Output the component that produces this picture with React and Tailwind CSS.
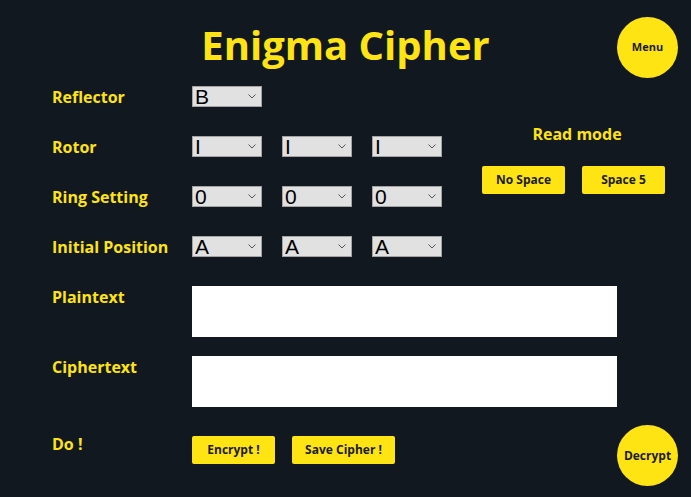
import React, { useState } from 'react';

const Chevron = () => (
  <svg
    className="pointer-events-none absolute right-[6px] top-[8px]"
    width="8"
    height="5"
    viewBox="0 0 8 5"
    fill="none"
  >
    <path d="M0.5 0.5 L4 4 L7.5 0.5" stroke="#555" strokeWidth="1" />
  </svg>
);

const Select = ({ value, options, onChange }) => (
  <div className="relative w-[70px] h-[21px]">
    <select
      value={value}
      onChange={(e) => onChange(e.target.value)}
      className="appearance-none w-full h-full bg-[#e1e1e1] border border-[#a3a3a3] text-black text-[21px] leading-[19px] pl-[2px] font-['Liberation_Sans',sans-serif] outline-none"
    >
      {options.map((o) => (
        <option key={o} value={o}>
          {o}
        </option>
      ))}
    </select>
    <Chevron />
  </div>
);

const Label = ({ children, className = '' }) => (
  <div className={`w-[140px] shrink-0 text-[16px] leading-6 font-bold text-[#ffe414] ${className}`}>
    {children}
  </div>
);

const YellowButton = ({ children, className = '' }) => (
  <button
    className={`h-[28px] rounded-[2px] bg-[#ffe414] text-[#1b1b1b] text-[12px] font-bold ${className}`}
  >
    {children}
  </button>
);

const rotors = ['I', 'II', 'III', 'IV', 'V'];
const rings = Array.from({ length: 26 }, (_, i) => String(i));
const letters = 'ABCDEFGHIJKLMNOPQRSTUVWXYZ'.split('');

export default function App() {
  const [reflector, setReflector] = useState('B');
  const [rotor, setRotor] = useState(['I', 'I', 'I']);
  const [ring, setRing] = useState(['0', '0', '0']);
  const [pos, setPos] = useState(['A', 'A', 'A']);

  const setAt = (arr, setter, i) => (v) => {
    const next = [...arr];
    next[i] = v;
    setter(next);
  };

  return (
    <div className="w-full h-[497px] bg-[#111820] font-['Open_Sans',sans-serif] overflow-hidden">
      {/* header */}
      <div className="grid grid-cols-[1fr_auto_1fr] items-start pt-[17px]">
        <div />
        <h1 className="text-[40px] leading-[54px] font-bold text-[#ffe414] mt-[1px]">Enigma Cipher</h1>
        <div className="flex justify-end pr-[13px]">
          <button className="w-[61px] h-[61px] rounded-full bg-[#ffe414] text-[#1b1b1b] text-[11px] font-bold">
            Menu
          </button>
        </div>
      </div>

      {/* settings */}
      <div className="flex pl-[52px] mt-[8px]">
        <div className="flex flex-col gap-[29px]">
          <div className="flex items-center h-[21px]">
            <Label>Reflector</Label>
            <Select value={reflector} options={['A', 'B', 'C']} onChange={setReflector} />
          </div>
          <div className="flex items-center h-[21px]">
            <Label>Rotor</Label>
            <div className="flex gap-[20px]">
              {rotor.map((r, i) => (
                <Select key={i} value={r} options={rotors} onChange={setAt(rotor, setRotor, i)} />
              ))}
            </div>
          </div>
          <div className="flex items-center h-[21px]">
            <Label>Ring Setting</Label>
            <div className="flex gap-[20px]">
              {ring.map((r, i) => (
                <Select key={i} value={r} options={rings} onChange={setAt(ring, setRing, i)} />
              ))}
            </div>
          </div>
          <div className="flex items-center h-[21px]">
            <Label>Initial Position</Label>
            <div className="flex gap-[20px]">
              {pos.map((r, i) => (
                <Select key={i} value={r} options={letters} onChange={setAt(pos, setPos, i)} />
              ))}
            </div>
          </div>
        </div>

        <div className="ml-[40px] w-[183px] flex flex-col items-center pt-[36px]">
          <div className="text-[16px] leading-6 font-bold text-[#ffe414] pl-[7px]">Read mode</div>
          <div className="flex gap-[17px] mt-[20px]">
            <YellowButton className="w-[83px]">No Space</YellowButton>
            <YellowButton className="w-[83px]">Space 5</YellowButton>
          </div>
        </div>
      </div>

      {/* texts */}
      <div className="flex pl-[52px] mt-[29px]">
        <Label className="-mt-[1px]">Plaintext</Label>
        <textarea className="w-[425px] h-[51px] bg-white resize-none outline-none" />
      </div>
      <div className="flex pl-[52px] mt-[19px]">
        <Label className="-mt-[1px]">Ciphertext</Label>
        <textarea className="w-[425px] h-[51px] bg-white resize-none outline-none" />
      </div>

      {/* actions */}
      <div className="flex items-start pl-[52px] pr-[13px] mt-[18px]">
        <Label className="mt-[7px]">Do !</Label>
        <div className="flex gap-[17px] mt-[11px]">
          <YellowButton className="w-[83px]">Encrypt !</YellowButton>
          <YellowButton className="w-[103px]">Save Cipher !</YellowButton>
        </div>
        <button className="ml-auto w-[61px] h-[61px] rounded-full bg-[#ffe414] text-[#1b1b1b] text-[12px] font-bold">
          Decrypt
        </button>
      </div>
    </div>
  );
}
